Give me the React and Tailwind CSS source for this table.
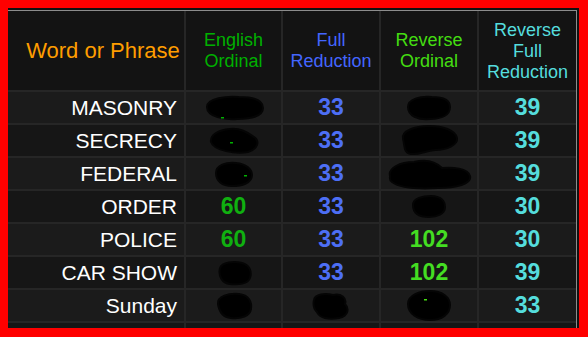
import React from "react";

const rows = [
  { word: "MASONRY", eo: null, fr: "33", ro: null, rfr: "39" },
  { word: "SECRECY", eo: null, fr: "33", ro: null, rfr: "39" },
  { word: "FEDERAL", eo: null, fr: "33", ro: null, rfr: "39" },
  { word: "ORDER", eo: "60", fr: "33", ro: null, rfr: "30" },
  { word: "POLICE", eo: "60", fr: "33", ro: "102", rfr: "30" },
  { word: "CAR SHOW", eo: null, fr: "33", ro: "102", rfr: "39" },
  { word: "Sunday", eo: null, fr: null, ro: null, rfr: "33" },
  { word: "", eo: null, fr: null, ro: null, rfr: null },
];

// black marker scribbles covering some values
const blobs = {
  "0-eo": { w: 62, h: 26, d: "M4 12 C4 3 24 1 36 2 C52 2 60 6 60 13 C60 21 48 24 34 24 C22 25 4 22 4 12 Z", dot: [18, 22] },
  "1-eo": { w: 52, h: 27, d: "M3 15 C2 8 10 3 22 2 C34 1 40 6 46 10 C52 14 50 22 40 25 C28 27 6 24 3 15 Z", dot: [22, 15] },
  "2-eo": { w: 40, h: 26, d: "M2 12 C2 4 12 1 22 2 C32 3 38 8 38 14 C38 22 28 25 18 25 C8 25 2 20 2 12 Z", dot: [30, 14] },
  "5-eo": { w: 36, h: 26, d: "M4 8 C6 2 18 1 26 3 C34 5 36 12 34 18 C32 24 22 25 14 24 C6 23 2 16 4 8 Z" },
  "6-eo": { w: 38, h: 28, d: "M3 12 C2 4 14 1 24 2 C34 3 37 10 36 17 C35 24 26 27 16 26 C7 25 4 19 3 12 Z" },
  "6-fr": { w: 40, h: 28, d: "M3 8 C4 2 14 1 22 3 C30 1 36 6 34 12 C38 16 38 24 28 26 C18 28 8 26 6 20 C2 16 2 12 3 8 Z" },
  "0-ro": { w: 46, h: 26, d: "M2 12 C2 4 14 1 26 2 C38 2 44 6 44 12 C44 20 36 24 24 24 C12 25 2 21 2 12 Z" },
  "1-ro": { w: 60, h: 32, d: "M4 14 C2 6 16 1 30 1 C44 1 56 5 58 13 C59 20 48 25 36 25 C26 26 20 30 12 29 C4 28 6 20 4 14 Z" },
  "2-ro": { w: 86, h: 32, d: "M4 18 C2 10 14 4 28 4 C40 1 50 4 56 10 C66 9 82 10 84 18 C86 26 70 30 52 30 C34 31 14 30 6 24 C3 22 4 20 4 18 Z" },
  "3-ro": { w: 36, h: 23, d: "M2 10 C2 3 12 1 20 1 C30 1 34 6 34 12 C34 19 26 22 18 22 C8 22 2 18 2 10 Z" },
  "6-ro": { w: 46, h: 31, d: "M2 14 C2 5 14 1 24 1 C36 1 44 7 44 15 C44 24 36 30 24 30 C12 30 2 24 2 14 Z", dot: [18, 9], lime: true },
};

function Blob({ id }) {
  const b = blobs[id];
  if (!b) return null;
  return (
    <svg width={b.w} height={b.h} viewBox={`0 0 ${b.w} ${b.h}`}>
      <path d={b.d} fill="#000" stroke="#050505" strokeWidth="2" />
      {b.dot && (
        <rect x={b.dot[0]} y={b.dot[1]} width="3" height="1.5" fill={b.lime ? "#44dd11" : "#00b000"} />
      )}
    </svg>
  );
}

function NumCell({ value, id, color, bg }) {
  return (
    <div className={`flex h-[31px] items-center justify-center ${bg}`}>
      {value ? (
        <span className={`text-[23px] font-bold leading-none ${color}`}>{value}</span>
      ) : (
        <Blob id={id} />
      )}
    </div>
  );
}

export default function App() {
  return (
    <div
      className="h-[337px] w-[588px] bg-[#ff0000] pb-[9px] pl-2 pr-[9px] pt-2"
      style={{ fontFamily: '"Liberation Sans", Arial, sans-serif' }}
    >
      <div className="h-full overflow-hidden bg-[#111111] pr-[2px] pt-[2px]">
        <div className="grid grid-cols-[176px_95px_96px_96px_97px] gap-[2px] border-r border-t border-[#8c8c8c] bg-[#262626]">
          <div className="flex h-[79px] items-center justify-center bg-[#131313] pl-[14px] text-[22px] text-[#ff9d00]">
            Word or Phrase
          </div>
          <div className="flex h-[79px] items-center justify-center bg-[#131313] text-center text-[18px] leading-[21px] text-[#00b000]">
            English<br />Ordinal
          </div>
          <div className="flex h-[79px] items-center justify-center bg-[#131313] text-center text-[18px] leading-[21px] text-[#4466ff]">
            Full<br />Reduction
          </div>
          <div className="flex h-[79px] items-center justify-center bg-[#131313] text-center text-[18px] leading-[21px] text-[#44dd11]">
            Reverse<br />Ordinal
          </div>
          <div className="flex h-[79px] items-center justify-center bg-[#131313] pt-[2px] text-center text-[18px] leading-[21px] text-[#55dddd]">
            Reverse<br />Full<br />Reduction
          </div>
          {rows.map((r, i) => {
            const bg = i % 2 === 0 ? "bg-[#1b1b1b]" : "bg-[#161616]";
            return (
              <React.Fragment key={i}>
                <div className={`flex h-[31px] items-center justify-end pr-[7px] pt-[1px] text-[21px] text-white ${bg}`}>
                  {r.word}
                </div>
                <NumCell value={r.eo} id={`${i}-eo`} color="text-[#10b010]" bg={bg} />
                <NumCell value={r.fr} id={`${i}-fr`} color="text-[#4d6ff5]" bg={bg} />
                <NumCell value={r.ro} id={`${i}-ro`} color="text-[#44dd22]" bg={bg} />
                <NumCell value={r.rfr} id={`${i}-rfr`} color="text-[#55dddd]" bg={bg} />
              </React.Fragment>
            );
          })}
        </div>
      </div>
    </div>
  );
}
